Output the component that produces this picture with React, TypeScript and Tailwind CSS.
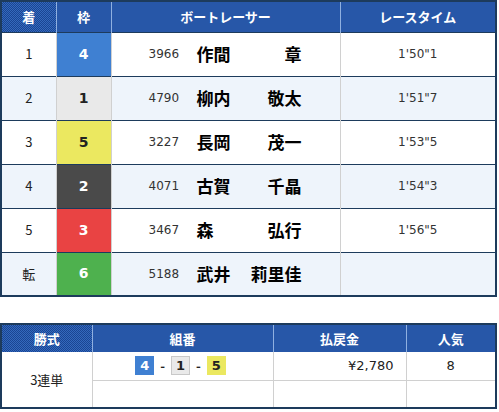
import React from "react";

const HEAD =
  "bg-[repeating-conic-gradient(#1a4593_0_25%,#3469bc_0_50%)] bg-[length:2px_2px] text-white font-bold text-[13px] h-[31px] text-center border-l border-l-[#8fb0e0]";

const FRAME: Record<number, string> = {
  1: "bg-[#e9e9e9] text-[#222]",
  2: "bg-[#4a4a4a] text-white",
  3: "bg-[#e94343] text-white",
  4: "bg-[#3f80d2] text-white",
  5: "bg-[#ebe860] text-[#222]",
  6: "bg-[#4eb14e] text-white",
};

const rows = [
  { rank: "1", frame: 4, no: "3966", sei: "作間", mei: "章", time: "1'50\"1" },
  { rank: "2", frame: 1, no: "4790", sei: "柳内", mei: "敬太", time: "1'51\"7" },
  { rank: "3", frame: 5, no: "3227", sei: "長岡", mei: "茂一", time: "1'53\"5" },
  { rank: "4", frame: 2, no: "4071", sei: "古賀", mei: "千晶", time: "1'54\"3" },
  { rank: "5", frame: 3, no: "3467", sei: "森", mei: "弘行", time: "1'56\"5" },
  { rank: "転", frame: 6, no: "5188", sei: "武井", mei: "莉里佳", time: "" },
];

function Box({ n }: { n: number }) {
  return (
    <span
      className={`inline-flex items-center justify-center w-[19px] h-[19px] text-[13px] font-bold font-['DejaVu_Sans',sans-serif] ${FRAME[n]} ${
        n === 1 ? "border border-[#c8c8c8]" : ""
      }`}
    >
      {n}
    </span>
  );
}

export default function App() {
  return (
    <div className="w-[499px] h-[412px] bg-white font-['Noto_Sans_CJK_JP','Noto_Sans',sans-serif] text-[#222] overflow-hidden">
      {/* Result table */}
      <table className="w-[497px] table-fixed border-collapse border-2 border-[#1d3b5c]">
        <colgroup>
          <col className="w-[55px]" />
          <col className="w-[55px]" />
          <col className="w-[229px]" />
          <col />
        </colgroup>
        <thead>
          <tr>
            <th className={HEAD + " border-l-0"}>着</th>
            <th className={HEAD}>枠</th>
            <th className={HEAD}>ボートレーサー</th>
            <th className={HEAD}>レースタイム</th>
          </tr>
        </thead>
        <tbody>
          {rows.map((r, i) => {
            const bg = i % 2 === 0 ? "bg-white" : "bg-[#eef4fb]";
            return (
              <tr key={r.no} className={`h-[44px] border-t border-[#1d3b5c] ${bg}`}>
                <td className="text-center text-[13px]">{r.rank}</td>
                <td
                  className={`text-center text-[14px] font-bold font-['DejaVu_Sans',sans-serif] border-x border-[#d0d0d0] ${FRAME[r.frame]}`}
                >
                  {r.frame}
                </td>
                <td className="border-r border-[#d0d0d0]">
                  <div className="flex items-center pl-[37px]">
                    <span className="w-[48px] text-[12px] text-[#333] font-['DejaVu_Sans',sans-serif]">{r.no}</span>
                    <span className="flex w-[105px] justify-between text-[17px] font-bold text-black">
                      <span>{r.sei}</span>
                      <span>{r.mei}</span>
                    </span>
                  </div>
                </td>
                <td className="text-center text-[12px] text-[#333] font-['DejaVu_Sans',sans-serif]">{r.time}</td>
              </tr>
            );
          })}
        </tbody>
      </table>

      {/* Payout table */}
      <table className="mt-[26px] w-[497px] table-fixed border-collapse border-2 border-[#1d3b5c]">
        <colgroup>
          <col className="w-[91px]" />
          <col className="w-[181px]" />
          <col className="w-[133px]" />
          <col />
        </colgroup>
        <thead>
          <tr>
            <th className={HEAD + " !h-[28px] border-l-0"}>勝式</th>
            <th className={HEAD + " !h-[28px]"}>組番</th>
            <th className={HEAD + " !h-[28px]"}>払戻金</th>
            <th className={HEAD + " !h-[28px]"}>人気</th>
          </tr>
        </thead>
        <tbody>
          <tr className="h-[28px] border-b border-[#d0d0d0]">
            <td rowSpan={2} className="text-center text-[13px] border-r border-[#d0d0d0]">3連単</td>
            <td className="border-r border-[#d0d0d0]">
              <div className="flex items-center justify-center gap-[6px] text-[13px] font-bold pr-[4px]">
                <Box n={4} />
                <span>-</span>
                <Box n={1} />
                <span>-</span>
                <Box n={5} />
              </div>
            </td>
            <td className="text-right pr-[12px] text-[13px] font-['DejaVu_Sans',sans-serif] border-r border-[#d0d0d0]">¥2,780</td>
            <td className="text-center text-[13px] font-['DejaVu_Sans',sans-serif]">8</td>
          </tr>
          <tr className="h-[28px]">
            <td className="border-r border-[#d0d0d0]"></td>
            <td className="border-r border-[#d0d0d0]"></td>
            <td></td>
          </tr>
        </tbody>
      </table>
    </div>
  );
}
